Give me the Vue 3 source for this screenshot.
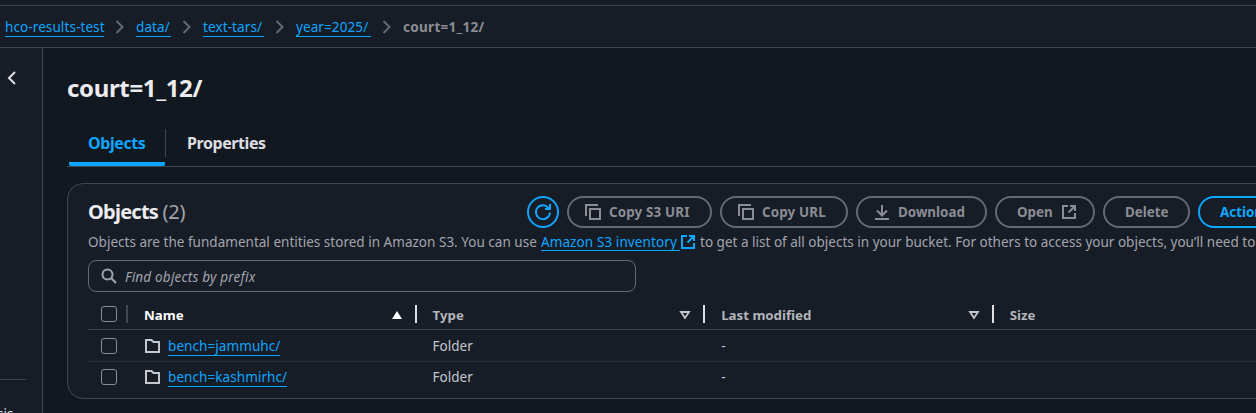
<script setup>
const crumbs = [
  { label: 'hco-results-test', w: 99 },
  { label: 'data/', w: 35 },
  { label: 'text-tars/', w: 61 },
  { label: 'year=2025/', w: 75 },
]
const rows = ['bench=jammuhc/', 'bench=kashmirhc/']
</script>

<template>
  <div class="page">
    <div class="topline"></div>
    <nav class="crumbs">
      <template v-for="c in crumbs" :key="c.label">
        <a class="link" :style="{ width: c.w + 'px' }">{{ c.label }}</a>
        <svg class="chev" width="10" height="14" viewBox="0 0 10 14"><path d="M1.5 1 7.5 7l-6 6" /></svg>
      </template>
      <b class="current">court=1_12/</b>
    </nav>
    <div class="body">
      <aside class="side">
        <svg class="back" width="10" height="14" viewBox="0 0 10 14"><path d="M8 1 2 7l6 6" /></svg>
        <div class="rule"></div>
        <span class="sidetext">sis</span>
      </aside>
      <main class="main">
        <h1>court=1_12/</h1>
        <div class="tabs">
          <div class="tab active"><span>Objects</span></div>
          <div class="sep"></div>
          <div class="tab"><span>Properties</span></div>
        </div>
        <section class="card">
          <div class="head">
            <h2>Objects <span>(2)</span></h2>
            <div class="actions">
              <div class="btn round">
                <svg width="16" height="16" viewBox="0 0 16 16"><path d="M15 8.5A7 7 0 1 1 13.3 3.6L14.5 5M15 0v5H10" /></svg>
              </div>
              <div class="btn b1">
                <svg width="16" height="16" viewBox="0 0 16 16"><path d="M5 5h10v10H5zM1 12V1h12" /></svg><span>Copy S3 URI</span>
              </div>
              <div class="btn b2">
                <svg width="16" height="16" viewBox="0 0 16 16"><path d="M5 5h10v10H5zM1 12V1h12" /></svg><span>Copy URL</span>
              </div>
              <div class="btn b3">
                <svg width="16" height="16" viewBox="0 0 16 16"><path d="M8 1v10M3 6.5l5 5 5-5M1 15h14" /></svg><span>Download</span>
              </div>
              <div class="btn b4">
                <span>Open</span><svg width="16" height="16" viewBox="0 0 16 16"><path d="M7 2H2v12h12V9M9 2h5v5M14 2 7.5 8.5" /></svg>
              </div>
              <div class="btn b5"><span>Delete</span></div>
              <div class="btn b6"><span>Actions</span></div>
            </div>
          </div>
          <p class="desc"><span class="d1">Objects are the fundamental entities stored in Amazon S3. You can use</span><a class="link inv">Amazon S3 inventory</a><svg class="ext" width="16" height="16" viewBox="0 0 16 16"><path d="M7 2H2v12h12V9M9 2h5v5M14 2 7.5 8.5" /></svg><span class="d2">to get a list of all objects in your bucket. For others to access your objects, you’ll need to</span></p>
          <div class="search">
            <svg width="16" height="16" viewBox="0 0 16 16"><circle cx="6.5" cy="6.5" r="5" /><path d="m10.3 10.3 4.7 4.7" /></svg>
            <i>Find objects by prefix</i>
          </div>
          <div class="table">
            <div class="row hdr">
              <div class="c0"><span class="box"></span><span class="bar dim"></span></div>
              <div class="c1"><b class="white">Name</b><svg width="12" height="10" viewBox="0 0 12 10"><path class="fill" d="M6 1 11 9H1z" /></svg><span class="bar"></span></div>
              <div class="c2"><b>Type</b><svg width="12" height="10" viewBox="0 0 12 10"><path d="M2 2h8L6 8z" /></svg><span class="bar"></span></div>
              <div class="c3"><b>Last modified</b><svg width="12" height="10" viewBox="0 0 12 10"><path d="M2 2h8L6 8z" /></svg><span class="bar"></span></div>
              <div class="c4"><b>Size</b></div>
            </div>
            <div v-for="r in rows" :key="r" class="row data">
              <div class="c0"><span class="box"></span></div>
              <div class="c1"><svg class="folder" width="16" height="16" viewBox="0 0 16 16"><path d="M1 2h5.5l2 2H14v10H1z" /></svg><a class="link">{{ r }}</a></div>
              <div class="c2">Folder</div>
              <div class="c3">-</div>
              <div class="c4"></div>
            </div>
          </div>
        </section>
      </main>
    </div>
  </div>
</template>

<style>
body { background: #161d26; overflow: hidden; }
</style>
<style scoped>
* { box-sizing: border-box; }
.page { width: 1256px; height: 413px; overflow: hidden; display: flex; flex-direction: column; background: #161d26; color: #c6c6cd; font: 13.5px/20px "Noto Sans", "Open Sans", sans-serif; white-space: nowrap; }
svg { fill: none; stroke: currentColor; stroke-width: 2; flex: none; }
.topline { height: 6px; border-bottom: 1px solid #424650; flex: none; }
.crumbs { height: 42px; flex: none; display: flex; align-items: center; padding: 0 0 0 5px; border-bottom: 1px solid #424650; }
.link { color: #0ea5ff; border-bottom: 1px solid #0ea5ff; line-height: 19px; height: 19px; }
.crumbs .link { margin-top: 1px; letter-spacing: 0.1px; }
.chev { color: #656871; margin: 0 11px; }
.current { color: #8c8c94; letter-spacing: 0.3px; }
.body { flex: 1; display: flex; min-height: 0; }
.side { width: 43px; flex: none; border-right: 1px solid #424650; display: flex; flex-direction: column; overflow: hidden; }
.back { margin: 23px 0 0 7px; color: #dedee3; flex: none; }
.rule { width: 26px; height: 1px; background: #424650; margin-top: 294px; flex: none; }
.sidetext { margin: 24px 0 0 -3px; color: #dedee3; }
.main { flex: 1; min-width: 0; background: #12181f; padding-left: 24px; overflow: hidden; }
h1 { margin: 23px 0 0; font-size: 24px; line-height: 34px; color: #ebebf0; letter-spacing: -0.35px; height: 34px; }
.tabs { height: 47px; margin-top: 15px; display: flex; border-bottom: 1px solid #424650; padding-left: 2px; }
.tab { font-size: 16px; font-weight: 700; line-height: 22px; color: #dedee3; padding: 12px 0 0 21px; letter-spacing: -0.42px; }
.tab.active { width: 96px; padding-left: 19px; color: #0ea5ff; border-bottom: 4px solid #0ea5ff; border-radius: 2px; }
.sep { width: 1px; height: 28px; background: #424650; margin-top: 9px; }
.card { width: 1260px; height: 216px; margin-top: 16px; border: 1px solid #424650; border-radius: 16px; background: #161d26; padding: 12px 0 0 20px; }
.head { display: flex; height: 32px; }
h2 { margin: 0; width: 439px; flex: none; font-size: 20px; line-height: 32px; color: #ebebf0; letter-spacing: -0.75px; }
h2 span { font-weight: 400; color: #a4a4ad; letter-spacing: -0.3px; }
.actions { display: flex; gap: 8px; }
.btn { height: 32px; border: 2px solid #656871; border-radius: 16px; color: #8c8c94; font-weight: 700; display: flex; align-items: center; gap: 8px; padding-left: 16px; flex: none; font-size: 13.4px; }
.round { width: 32px; padding: 0; justify-content: center; border-color: #0ea5ff; color: #0ea5ff; }
.b1 { width: 145px; letter-spacing: 0.15px; } .b2 { width: 128px; letter-spacing: 0.15px; } .b3 { width: 131px; }
.b4 { width: 100px; padding-left: 20px; } .b5 { width: 87px; padding-left: 20px; }
.b6 { width: 140px; padding-left: 20px; border-color: #0ea5ff; color: #0ea5ff; }
.desc { margin: 4px 0 0; height: 20px; display: flex; line-height: 20px; color: #a4a4ad; }
.d1 { width: 453px; flex: none; letter-spacing: 0.02px; }
.d2 { letter-spacing: 0.01px; }
.inv { width: 139px; flex: none; height: 19px; line-height: 20px; letter-spacing: 0.1px; }
.ext { margin: 2px 4px 0 0; color: #0ea5ff; }
.search { margin-top: 8px; width: 548px; height: 32px; border: 1px solid #656871; border-radius: 8px; display: flex; align-items: center; padding-left: 12px; gap: 8px; color: #a4a4ad; letter-spacing: 0.2px; }
.search i { padding-top: 2px; }
.table { margin-top: 7px; }
.row { display: flex; align-items: center; }
.hdr { height: 31px; border-bottom: 1px solid #424650; }
.data { height: 31px; }
.data + .data { border-top: 1px solid #232b37; }
.row > div { display: flex; align-items: center; flex: none; }
.c0 { width: 56px; padding-left: 13px; }
.c1, .c2, .c3 { width: 288.6px; }
.box { width: 16px; height: 16px; border: 1px solid #8c8c94; border-radius: 3px; }
.hdr svg { margin-left: auto; stroke-width: 1.8; margin-top: 1px; }
.bar { width: 2px; height: 18px; background: #dedee3; margin: 0 16px 0 12px; }
.dim { background: #424650; margin: 0 0 0 9px; }
.hdr b { color: #b4b4bb; padding-top: 2px; font-size: 13.25px; }
.hdr .white { color: #fff; }
.fill { fill: #fff; stroke: none; }
.folder { margin: 0 7px 0 1px; }
.data .link { letter-spacing: 0.08px; margin-top: 1px; }
</style>
